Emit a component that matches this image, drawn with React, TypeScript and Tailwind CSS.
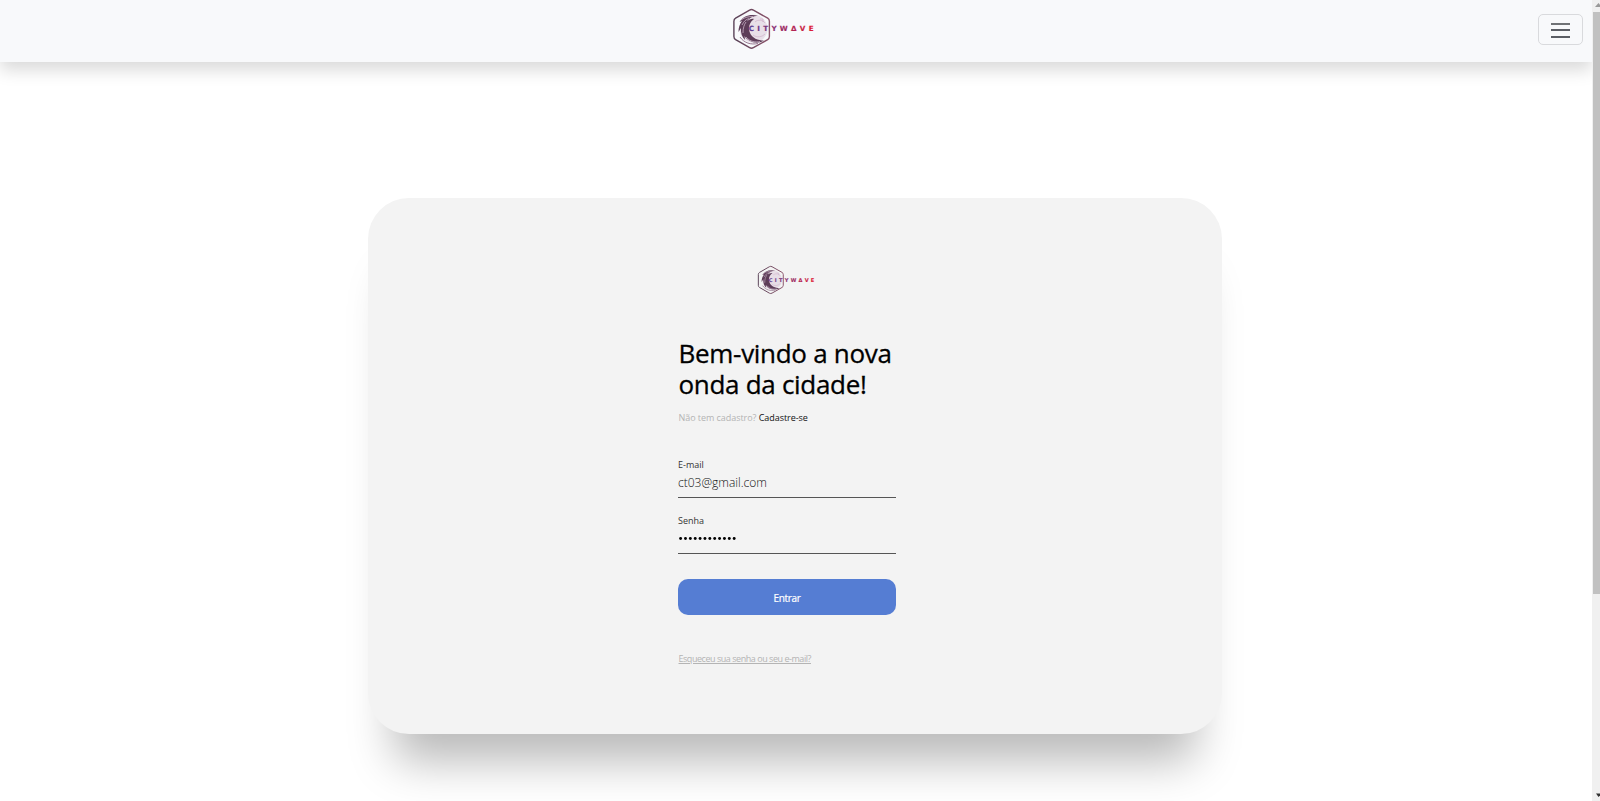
import React from "react";

function Logo({ id, className }: { id: string; className: string }) {
  return (
    <svg viewBox="0 0 84 42" className={className} role="img" aria-label="Citywave">
      <defs>
        <linearGradient id={`${id}-text`} gradientUnits="userSpaceOnUse" x1="17" y1="0" x2="82" y2="0">
          <stop offset="0" stopColor="#5b3d92" />
          <stop offset="0.45" stopColor="#8f2c6b" />
          <stop offset="1" stopColor="#e01a32" />
        </linearGradient>
        <linearGradient id={`${id}-hex`} x1="0" y1="0" x2="1" y2="0">
          <stop offset="0" stopColor="#594257" />
          <stop offset="1" stopColor="#8a536a" />
        </linearGradient>
      </defs>
      <path d="M17.6 2.1Q19.5 1 21.4 2.1L35.7 10.2Q37.4 11.2 37.4 13.2V28.6Q37.4 30.6 35.7 31.6L21.4 39.7Q19.5 40.8 17.6 39.7L3.6 31.6Q1.9 30.6 1.9 28.6V13.2Q1.9 11.2 3.6 10.2Z" fill="none" stroke={`url(#${id}-hex)`} strokeWidth="1.4" />
      <circle cx="21.5" cy="20.8" r="14" fill="#e3d5e1" opacity=".75" />
      <path d="M26 8C19 5.500 11 8 7.500 14L10 13C7.500 16 6.500 20 6.500 24L9 20C8.500 25 10 29 13 32L12.500 28C16 34 25 37 32 32.500C26 32.500 20 30 18 25C15.500 19 18 14 22 11C19.500 10.500 17 11.500 15 13.500C17.500 9.500 21 8 26 8Z" fill="#5d3d58" />
      <path d="M9 12C13 9 17 8.500 21 8.500M10 17C12 13 14 11.500 17 10.500M11 25C11 20 12 17 14 14M14 29C18 34 24 34.500 28 33.500" fill="none" stroke="#d9c3d6" strokeWidth=".7" />
      <path d="M8 29C12 35 19 37 26 35.500" fill="none" stroke="#8d6a86" strokeWidth=".9" />
      <path d="M21 27C25 30 30 29 33 26M23 14C26 11 31 12 33 15M28 11h3v3" fill="none" stroke="#cba9c5" strokeWidth=".6" />
      <text x="16.8" y="23.2" textLength="64.8" lengthAdjust="spacing" fill={`url(#${id}-text)`} stroke={`url(#${id}-text)`} strokeWidth=".15" className="font-['DejaVu_Sans'] text-[7.2px] font-bold">CITYWΔVE</text>
    </svg>
  );
}

function Field({ label, type, value }: { label: string; type: string; value: string }) {
  return (
    <label className="flex h-10 w-[218px] flex-col border-b border-[#555] text-[9px] leading-[14px] text-[#333]">
      {label}
      {type === "password" ? (
        <svg viewBox="0 0 60 20" className="h-5 w-[60px]" aria-label="Senha">
          {value.split("").map((_, i) => (
            <circle key={i} cx={2.6 + i * 4.87} cy="10.5" r="1.45" fill="#000" />
          ))}
        </svg>
      ) : (
        <input type={type} defaultValue={value} className="h-5 w-full bg-transparent text-[12px] font-light text-[#111] outline-none" />
      )}
    </label>
  );
}

export default function App() {
  return (
    <div className="flex h-[801px] w-[1600px] overflow-hidden bg-white font-['Open_Sans','Noto_Sans',sans-serif]">
      <div className="flex w-[1592px] flex-col overflow-hidden">
        <header className="flex h-[62px] shrink-0 items-start bg-[#f8f9fb] shadow-[0_8px_16px_rgba(0,0,0,0.15)]">
          <Logo id="nav" className="ml-[732px] mt-2 h-[42px] w-[84px]" />
          <button aria-label="Menu" className="ml-[722px] mt-[14px] flex h-[31px] w-[45px] flex-col items-center justify-center gap-[4.5px] rounded-[5px] border border-[#d9dadd] pt-px">
            <i className="h-[2px] w-[19px] bg-[#707276]" />
            <i className="h-[2px] w-[19px] bg-[#5b5e65]" />
            <i className="h-[2px] w-[19px] bg-[#5b5e65]" />
          </button>
        </header>
        <main className="ml-[368px] mt-[136px] flex h-[536px] w-[854px] shrink-0 flex-col rounded-[41px] bg-[#f3f3f3] pl-[310px] shadow-[0_53px_46px_-26px_rgba(0,0,0,0.28)]">
          <Logo id="card" className="ml-[79px] mt-[67px] h-[30px] w-[59px]" />
          <h1 className="mt-[43px] whitespace-nowrap pl-[0.5px] text-[26px] leading-[31px] tracking-[-0.3px] text-black [-webkit-text-stroke:0.3px_black]">
            Bem-vindo a nova
            <br />
            onda da cidade!
          </h1>
          <p className="mt-[11px] whitespace-nowrap pl-[0.5px] text-[9px] leading-[14px] tracking-[-0.05px] text-[#b4b4b4]">
            Não tem cadastro? <a className="text-[#111]">Cadastre-se</a>
          </p>
          <div className="mt-[33px] flex flex-col gap-4">
            <Field label="E-mail" type="email" value="ct03@gmail.com" />
            <Field label="Senha" type="password" value="000000000000" />
          </div>
          <button className="mt-[25px] h-9 w-[218px] shrink-0 rounded-[10px] bg-[#557dd3] pt-[2px] text-[10px] tracking-[-0.35px] text-white [-webkit-text-stroke:0.2px_white]">
            Entrar
          </button>
          <a className="mt-[37px] whitespace-nowrap pl-[0.5px] text-[9px] leading-[14px] tracking-[-0.46px] text-[#b4b4b4] underline">
            Esqueceu sua senha ou seu e-mail?
          </a>
        </main>
      </div>
      <div className="flex w-2 flex-col overflow-hidden bg-[#f0f0f0]">
        <svg viewBox="0 0 8 12" className="h-3 w-2 shrink-0">
          <path d="M3 7L6.5 3L10 7Z" fill="#999" />
        </svg>
        <div className="ml-px h-[582px] w-[7px] shrink-0 bg-[#c1c1c1]" />
        <div className="flex-1" />
        <svg viewBox="0 0 8 12" className="h-3 w-2 shrink-0">
          <path d="M4 4.5L6.5 8L10 4.5Z" fill="#333" />
        </svg>
      </div>
    </div>
  );
}
